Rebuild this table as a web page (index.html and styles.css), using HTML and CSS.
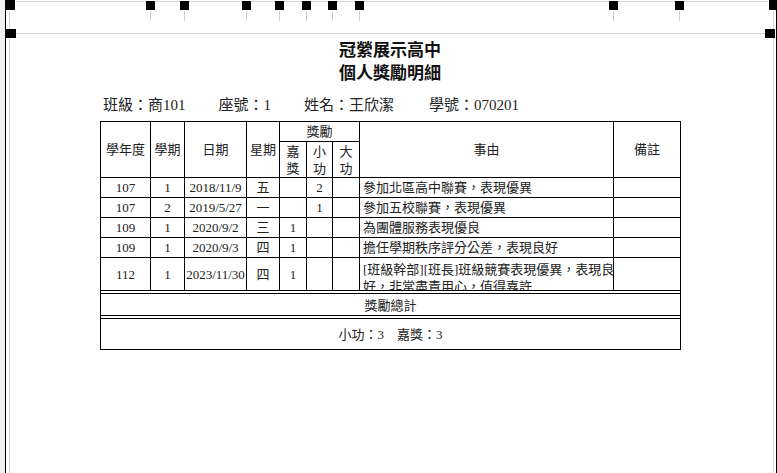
FILE: index.html
```html
<!DOCTYPE html>
<html lang="zh-Hant">
<head>
<meta charset="utf-8">
<title>個人獎勵明細</title>
<link rel="stylesheet" href="styles.css">
</head>
<body>
<div class="page">
  <div class="guides">
    <span class="vline black left"></span>
    <span class="vline black right"></span>
    <span class="vline grey gleft"></span>
    <span class="vline grey gright"></span>
    <span class="hline top"></span>
    <span class="hline mid"></span>
    <span class="sq corner-tl"></span>
    <span class="sq corner-tr"></span>
    <span class="sq corner-ml"></span>
    <span class="sq corner-mr"></span>
    <span class="mk" style="left:146px"></span>
    <span class="mk" style="left:180px"></span>
    <span class="mk" style="left:242px"></span>
    <span class="mk" style="left:275px"></span>
    <span class="mk" style="left:302px"></span>
    <span class="mk" style="left:328px"></span>
    <span class="mk" style="left:355px"></span>
    <span class="mk" style="left:609px"></span>
    <span class="mk" style="left:675px"></span>
  </div>

  <div class="report">
    <div class="title">
      <div>冠縈展示高中</div>
      <div>個人獎勵明細</div>
    </div>
    <div class="info">
      <span>班級：商101</span>
      <span>座號：1</span>
      <span class="name">姓名：王欣潔</span>
      <span>學號：070201</span>
    </div>
    <table class="grid">
      <colgroup>
        <col class="c-year"><col class="c-sem"><col class="c-date"><col class="c-wk">
        <col class="c-r"><col class="c-r2"><col class="c-r"><col class="c-reason"><col class="c-note">
      </colgroup>
      <thead>
        <tr class="h1">
          <th rowspan="2">學年度</th>
          <th rowspan="2">學期</th>
          <th rowspan="2">日期</th>
          <th rowspan="2">星期</th>
          <th colspan="3">獎勵</th>
          <th rowspan="2">事由</th>
          <th rowspan="2">備註</th>
        </tr>
        <tr class="h2">
          <th>嘉<br>獎</th>
          <th>小<br>功</th>
          <th>大<br>功</th>
        </tr>
      </thead>
      <tbody>
        <tr class="row">
          <td>107</td><td>1</td><td>2018/11/9</td><td>五</td><td></td><td>2</td><td></td>
          <td class="reason">參加北區高中聯賽，表現優異</td><td></td>
        </tr>
        <tr class="row">
          <td>107</td><td>2</td><td>2019/5/27</td><td>一</td><td></td><td>1</td><td></td>
          <td class="reason">參加五校聯賽，表現優異</td><td></td>
        </tr>
        <tr class="row">
          <td>109</td><td>1</td><td>2020/9/2</td><td>三</td><td>1</td><td></td><td></td>
          <td class="reason">為團體服務表現優良</td><td></td>
        </tr>
        <tr class="row">
          <td>109</td><td>1</td><td>2020/9/3</td><td>四</td><td>1</td><td></td><td></td>
          <td class="reason">擔任學期秩序評分公差，表現良好</td><td></td>
        </tr>
        <tr class="row tall">
          <td>112</td><td>1</td><td>2023/11/30</td><td>四</td><td>1</td><td></td><td></td>
          <td class="reason"><div class="clip">[班級幹部][班長]班級競賽表現優異，表現良<br>好，非常盡責用心，值得嘉許</div></td><td></td>
        </tr>
        <tr class="total-head">
          <td colspan="9">獎勵總計</td>
        </tr>
        <tr class="total">
          <td colspan="9">小功：3　嘉獎：3</td>
        </tr>
      </tbody>
    </table>
  </div>
</div>
</body>
</html>
```
FILE: styles.css
```css
* { box-sizing: border-box; }
html, body { margin: 0; padding: 0; background: #fff; }
body {
  font-family: "Liberation Serif", "Noto Sans CJK TC", serif;
  color: #111;
}
.page {
  position: relative;
  width: 777px;
  height: 473px;
  overflow: hidden;
  background: #fff;
  border-left: 5px solid #f0f0f0;
}
.guides { position: absolute; inset: 0 0 0 -5px; pointer-events: none; }
.vline { position: absolute; top: 0; bottom: 0; width: 1px; }
.vline.black { background: #000; }
.vline.left { left: 5px; }
.vline.right { left: 776px; }
.vline.grey { background: #d3d8e2; top: 11px; }
.vline.gleft { left: 9px; }
.vline.gright { left: 773px; }
.hline { position: absolute; height: 1px; background: #d3d8e2; left: 16px; width: 752px; }
.hline.top { top: 1px; }
.hline.mid { top: 33px; }
.sq { position: absolute; background: #000; }
.corner-tl { left: 5px; top: 0; width: 10px; height: 10px; }
.corner-tr { left: 769px; top: 0; width: 8px; height: 10px; }
.corner-ml { left: 5px; top: 29px; width: 11px; height: 9px; }
.corner-mr { left: 765px; top: 29px; width: 10px; height: 9px; }
.mk { position: absolute; top: 1px; width: 9px; height: 9px; background: #000; }
.mk::after {
  content: ""; position: absolute; left: 4px; top: 10px; width: 1px; height: 10px; background: #c9cfda;
}

.report {
  padding-top: 39px;
  margin-left: 95px;
  width: 580px;
  display: flex;
  flex-direction: column;
}
.title {
  text-align: center;
  font-weight: bold;
  font-size: 17px;
  line-height: 23px;
  color: #111;
}
.info {
  margin-top: 10px;
  padding-left: 3px;
  font-size: 15px;
  line-height: 20px;
  color: #222;
  display: flex;
  gap: 33px;
  white-space: nowrap;
}
.info .name { margin-right: 2px; }
.grid {
  margin-top: 6px;
  width: 580px;
  table-layout: fixed;
  border-collapse: collapse;
  border: 1px solid #000;
  font-size: 13px;
  color: #222;
}
.c-year { width: 50px; }
.c-sem { width: 34px; }
.c-date { width: 62px; }
.c-wk { width: 33px; }
.c-r { width: 27px; }
.c-r2 { width: 26px; }
.c-reason { width: 254px; }
.c-note { width: 67px; }
.grid th, .grid td {
  border: 1px solid #000;
  padding: 0;
  text-align: center;
  vertical-align: middle;
  font-weight: normal;
  line-height: 17px;
  overflow: hidden;
  white-space: nowrap;
}
.h1 { height: 20px; }
.h2 { height: 36px; }
.row { height: 20px; }
.row.tall { height: 33px; }
.grid td.reason { text-align: left; padding-left: 3px; }
.clip { height: 31px; overflow: hidden; padding-top: 2px; }
.total-head td, .total td {
  border-top: 1px solid #000;
  box-shadow: inset 0 2px 0 #fff, inset 0 3px 0 #000;
}
.total-head td { height: 25px; padding-top: 4px; }
.total td { height: 34px; padding-top: 3px; }
```
